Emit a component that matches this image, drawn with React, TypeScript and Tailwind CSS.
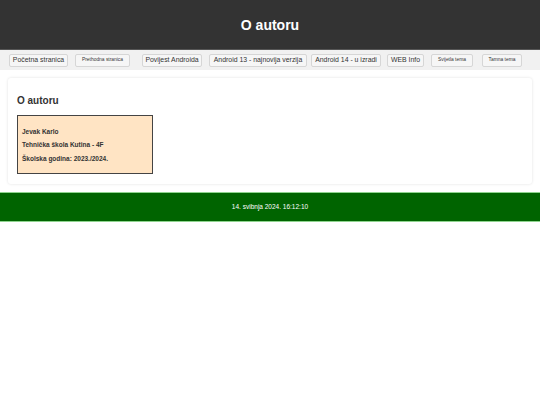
const navButtons: { label: string; small?: boolean; cls: string }[] = [
  { label: "Početna stranica", cls: "ml-[9px] w-[59px]" },
  { label: "Prethodna stranica", small: true, cls: "ml-[7px] w-[55px]" },
  { label: "Povijest Androida", cls: "ml-[12px] w-[60px]" },
  { label: "Android 13 - najnovija verzija", cls: "ml-[7px] w-[98px]" },
  { label: "Android 14 - u izradi", cls: "ml-[4px] w-[70px]" },
  { label: "WEB Info", cls: "ml-[6px] w-[37px]" },
  { label: "Svijetla tema", small: true, cls: "ml-[7px] w-[42px]" },
  { label: "Tamna tema", small: true, cls: "ml-[9px] w-[40px]" },
];

export default function App() {
  return (
    <div className="min-h-[405px] bg-white font-['Liberation_Sans',Arial,sans-serif] text-[#333]">
      <header className="flex h-[50px] items-center justify-center border-b border-[#555] bg-[#333] pt-[1px]">
        <h1 className="text-[14px] font-bold text-white">O autoru</h1>
      </header>

      <nav className="flex h-[20px] items-center bg-[#f1f1f1]">
        {navButtons.map((b) => (
          <button
            key={b.label}
            className={`${b.cls} flex h-[13px] shrink-0 items-center justify-center whitespace-nowrap rounded-[2px] border border-[#d6d6d6] bg-[#f6f6f6] leading-none text-[#333] ${
              b.small ? "pt-[1px] text-[4.9px]" : "text-[6.9px]"
            }`}
          >
            {b.label}
          </button>
        ))}
      </nav>

      <main className="px-[8px] pt-[8px] pb-[8px]">
        <section className="h-[106px] rounded-[3px] bg-white px-[9px] pt-[18px] shadow-[0_0_3px_rgba(0,0,0,0.12)]">
          <h2 className="text-[10px] font-bold leading-none">O autoru</h2>
          <div className="mt-[9px] flex h-[59px] w-[136px] flex-col justify-center gap-[6.5px] border border-[#444] bg-[#ffe4c4] pl-[4px] text-[6.5px] font-bold leading-[7px]">
            <p>Jevak Karlo</p>
            <p>Tehnička škola Kutina - 4F</p>
            <p>Školska godina: 2023./2024.</p>
          </div>
        </section>
      </main>

      <footer className="flex h-[30px] items-center justify-center border-y border-[#8fd48f] bg-[#006400] text-[6.5px] text-white">
        14. svibnja 2024. 16:12:10
      </footer>
    </div>
  );
}
